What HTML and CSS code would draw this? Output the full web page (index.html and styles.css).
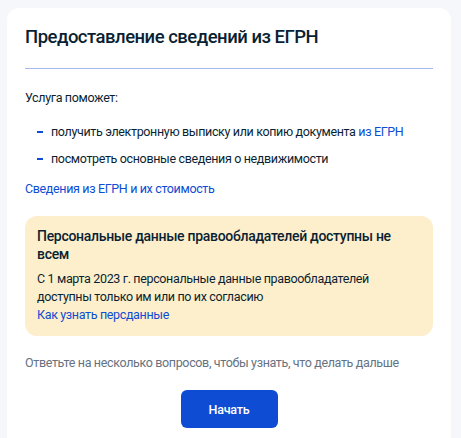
FILE: index.html
```html
<!DOCTYPE html>
<html lang="ru">
<head>
<meta charset="utf-8">
<link rel="stylesheet" href="styles.css">
</head>
<body>
<main class="card">
  <h1 class="title">Предоставление сведений из ЕГРН</h1>
  <hr class="divider">
  <p class="lead">Услуга поможет:</p>
  <ul class="list">
    <li>получить электронную выписку или копию документа <a href="#" class="link">из ЕГРН</a></li>
    <li>посмотреть основные сведения о недвижимости</li>
  </ul>
  <a href="#" class="link block-link">Сведения из ЕГРН и их стоимость</a>
  <section class="notice">
    <h2 class="notice-title">Персональные данные правообладателей доступны не всем</h2>
    <p class="notice-text">С 1 марта 2023 г. персональные данные правообладателей доступны только им или по их согласию</p>
    <a href="#" class="link notice-link">Как узнать персданные</a>
  </section>
  <p class="hint">Ответьте на несколько вопросов, чтобы узнать, что делать дальше</p>
  <div class="actions">
    <button class="btn" type="button">Начать</button>
  </div>
</main>
</body>
</html>
```
FILE: styles.css
```css
html, body {
  margin: 0;
  padding: 0;
  height: 100%;
  overflow: hidden;
}
body {
  background: #f5f7fb;
  font-family: Roboto, "Noto Sans", sans-serif;
  font-size: 12.5px;
  letter-spacing: -0.35px;
  color: #0b1f33;
}
.card {
  margin: 8px 0 0 7px;
  width: 444px;
  box-sizing: border-box;
  background: #fff;
  border-radius: 12px;
  padding: 15px 18px 40px;
}
.title {
  margin: 0;
  font-size: 18.5px;
  line-height: 28px;
  font-weight: 500;
  letter-spacing: -0.5px;
}
.divider {
  margin: 17px 0 0;
  border: 0;
  height: 1px;
  background: #a3b8ec;
}
.lead {
  margin: 19px 0 0;
  line-height: 20px;
}
.list {
  list-style: none;
  margin: 14px 0 0;
  padding: 0;
  display: flex;
  flex-direction: column;
  gap: 7px;
}
.list li {
  position: relative;
  padding-left: 26px;
  line-height: 20px;
}
.list li::before {
  content: "";
  position: absolute;
  left: 12px;
  top: 9px;
  width: 6px;
  height: 2px;
  background: #0d4cd3;
}
.link {
  color: #0d4cd3;
  text-decoration: none;
}
.block-link {
  display: block;
  margin-top: 10px;
  line-height: 20px;
}
.notice {
  margin-top: 17px;
  background: #fdefcb;
  border-radius: 12px;
  padding: 11px 12px 12px;
}
.notice-title {
  margin: 0;
  font-size: 14px;
  line-height: 18px;
  font-weight: 500;
  letter-spacing: -0.3px;
}
.notice-text {
  margin: 7px 0 0;
  line-height: 18px;
}
.notice-link {
  display: block;
  line-height: 18px;
}
.hint {
  margin: 17px 0 0;
  line-height: 20px;
  color: #66727f;
}
.actions {
  display: flex;
  justify-content: center;
  margin-top: 17px;
}
.btn {
  width: 97px;
  height: 38px;
  border: 0;
  border-radius: 6px;
  background: #0d4cd3;
  color: #fff;
  font-family: Roboto, "Noto Sans", sans-serif;
  font-size: 12.5px;
  font-weight: 500;
  letter-spacing: -0.2px;
  padding: 0;
}
```
